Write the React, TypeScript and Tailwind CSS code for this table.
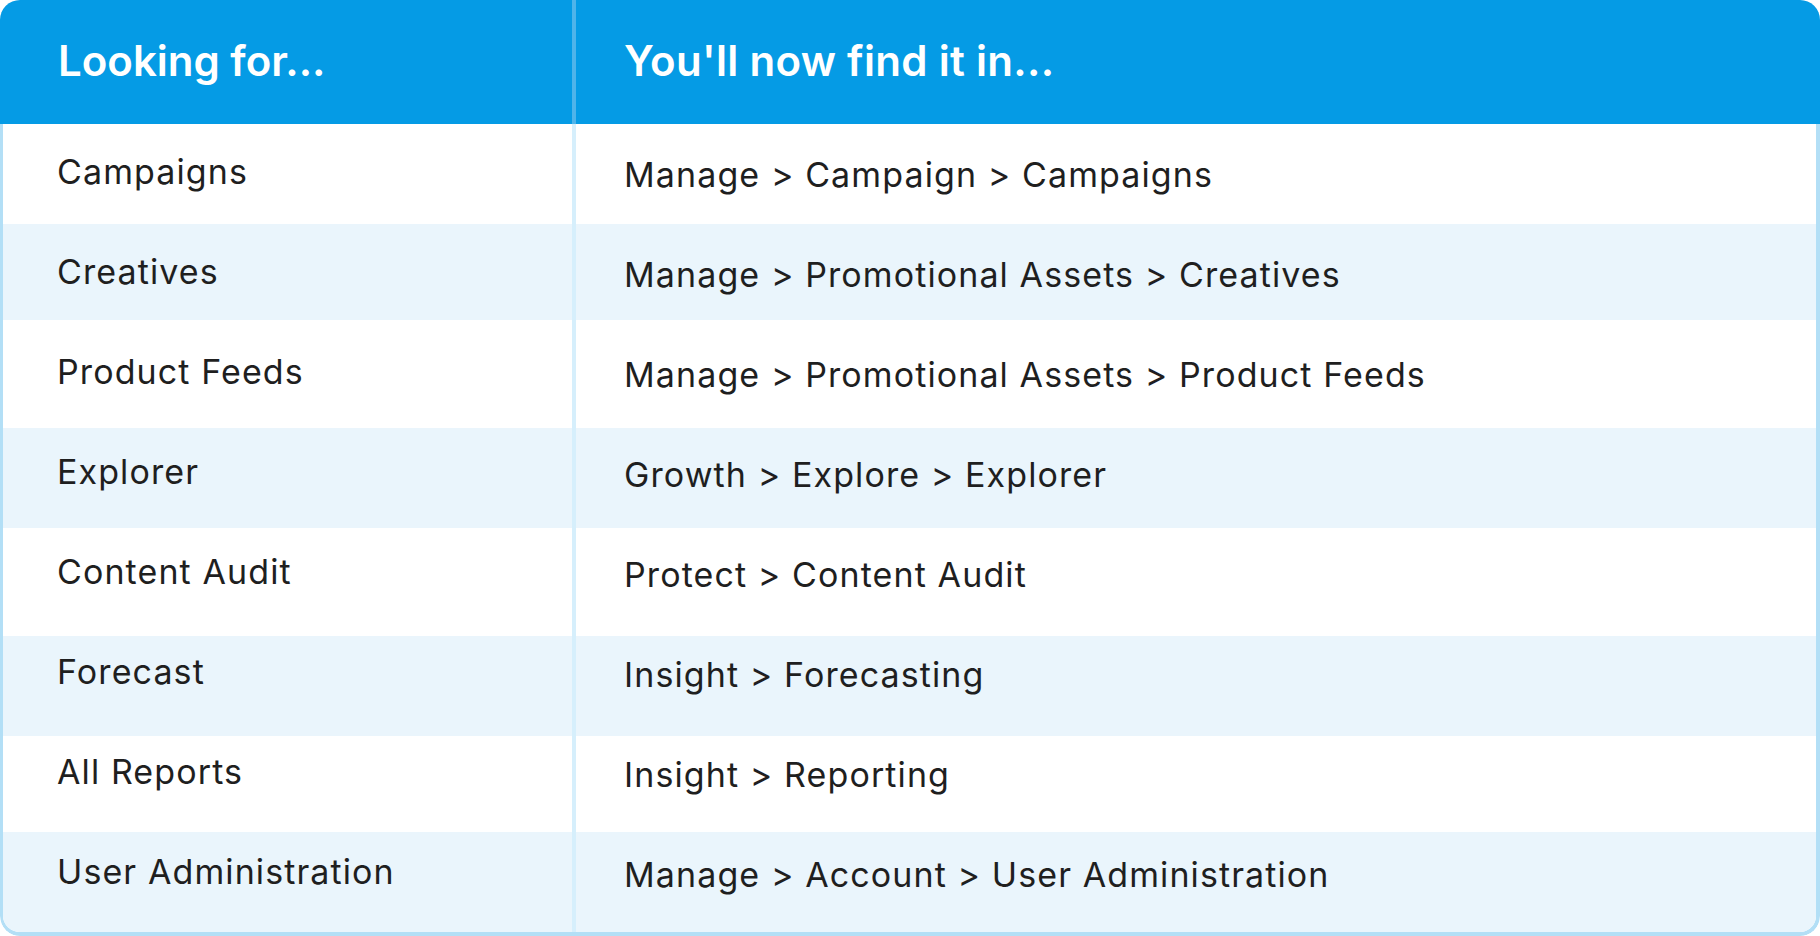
import React from 'react'

// where each old page now lives
const rows = [
  { label: 'Campaigns', path: ['Manage', 'Campaign', 'Campaigns'], h: 'h-[100px]', bg: 'bg-white', pl: 'pt-[31px]', pr: 'pt-[34px]' },
  { label: 'Creatives', path: ['Manage', 'Promotional Assets', 'Creatives'], h: 'h-[96px]', bg: 'bg-[#eaf5fc]', pl: 'pt-[31px]', pr: 'pt-[34px]' },
  { label: 'Product Feeds', path: ['Manage', 'Promotional Assets', 'Product Feeds'], h: 'h-[108px]', bg: 'bg-white', pl: 'pt-[35px]', pr: 'pt-[38px]' },
  { label: 'Explorer', path: ['Growth', 'Explore', 'Explorer'], h: 'h-[100px]', bg: 'bg-[#eaf5fc]', pl: 'pt-[27px]', pr: 'pt-[30px]' },
  { label: 'Content Audit', path: ['Protect', 'Content Audit'], h: 'h-[108px]', bg: 'bg-white', pl: 'pt-[27px]', pr: 'pt-[30px]' },
  { label: 'Forecast', path: ['Insight', 'Forecasting'], h: 'h-[100px]', bg: 'bg-[#eaf5fc]', pl: 'pt-[19px]', pr: 'pt-[22px]' },
  { label: 'All Reports', path: ['Insight', 'Reporting'], h: 'h-[96px]', bg: 'bg-white', pl: 'pt-[19px]', pr: 'pt-[22px]' },
  { label: 'User Administration', path: ['Manage', 'Account', 'User Administration'], h: 'h-[100px]', bg: 'bg-[#eaf5fc]', pl: 'pt-[23px]', pr: 'pt-[26px]' },
]

export default function App() {
  return (
    <div className="w-[1820px] h-[936px] bg-white font-['Inter','Noto_Sans',sans-serif] text-[#1f1f1f]">
      <div className="rounded-[20px] overflow-hidden">
        {/* Header */}
        <div className="grid grid-cols-[572px_4px_1fr] h-[124px] bg-[#059be5] text-white">
          <div className="pl-[58px] pt-[40px] text-[42px] font-semibold leading-none">Looking for...</div>
          <div className="bg-[#4fb4ea]"></div>
          <div className="pl-[48px] pt-[40px] text-[42px] font-semibold leading-none tracking-[0.3px]">You'll now find it in...</div>
        </div>

        {/* Rows */}
        <div className="border-l-[3px] border-r-4 border-b-4 border-[#b3dff6] rounded-b-[20px] overflow-hidden">
          {rows.map((r) => (
            <div key={r.label} className={`grid grid-cols-[569px_4px_1fr] ${r.h} ${r.bg}`}>
              <div className={`pl-[54px] ${r.pl} text-[34px] leading-none tracking-[1.1px]`}>{r.label}</div>
              <div className="bg-[#d6effc]"></div>
              <div className={`pl-[48px] ${r.pr} text-[34px] leading-none tracking-[1.1px]`}>
                {r.path.join(' > ')}
              </div>
            </div>
          ))}
        </div>
      </div>
    </div>
  )
}
